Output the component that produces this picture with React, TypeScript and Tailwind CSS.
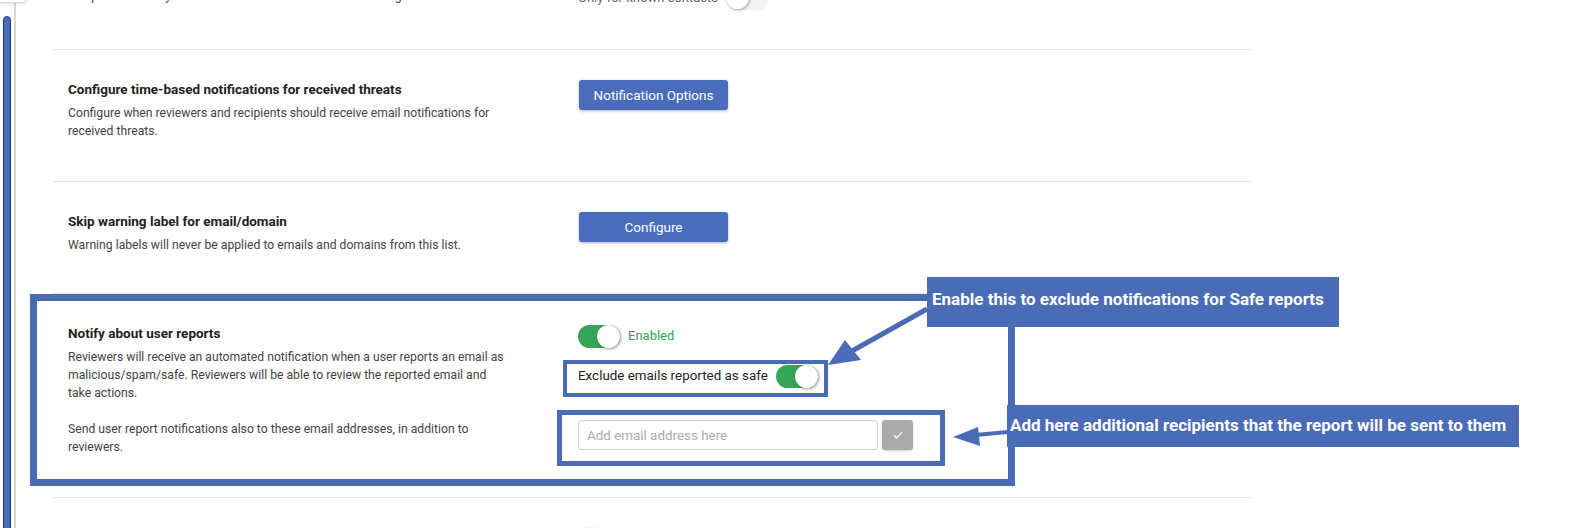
import React from "react";

function Toggle({ on }: { on: boolean }) {
  if (on) {
    return (
      <div className="flex h-[23px] w-[42px] shrink-0 items-center justify-end rounded-full bg-[#36a558]">
        <div className="h-[23px] w-[23px] rounded-full bg-white shadow-[1px_1px_3px_rgba(0,0,0,0.4)]" />
      </div>
    );
  }
  return (
    <div className="flex h-[23px] w-[42px] shrink-0 items-center justify-start rounded-full bg-[#f3f3f3] shadow-[0_1px_2px_rgba(0,0,0,0.08)]">
      <div className="h-[23px] w-[23px] rounded-full bg-white shadow-[1px_1px_3px_rgba(0,0,0,0.3)]" />
    </div>
  );
}

function Title({ children }: { children: React.ReactNode }) {
  return <div className="text-[13.5px] font-bold leading-[18px] text-[#222]">{children}</div>;
}

function Desc({ children, className = "" }: { children: React.ReactNode; className?: string }) {
  return <div className={"text-[12.2px] leading-[18px] text-[#444] " + className}>{children}</div>;
}

function BlueButton({ label }: { label: string }) {
  return (
    <button className="ml-px flex h-[30px] w-[149px] items-center justify-center rounded-[3px] bg-[#4a6dbb] text-[13.5px] text-white shadow-[0_1px_3px_rgba(0,0,0,0.3)]">
      {label}
    </button>
  );
}

export default function App() {
  return (
    <div className="relative h-[528px] w-[1589px] overflow-hidden bg-white font-['Roboto',sans-serif]">
      <div className="flex h-full">
        {/* sidebar rail */}
        <div className="flex h-full w-[53px] shrink-0">
          <div className="ml-[3px] mt-[16px] h-full w-[8px] rounded-t-full border border-[#1f3a73] bg-[#4a6cb7]" />
          <div className="ml-[3px] h-full w-[2px] bg-[#d8d8d8]" />
        </div>

        {/* content */}
        <div className="flex w-[1200px] flex-col">
          {/* row 0 (cut off) */}
          <div className="flex h-[50px] shrink-0 border-b border-[#e3e3e3] pl-[15px]">
            <div className="w-[510px] shrink-0">
              <Desc className="-mt-[13px] whitespace-nowrap">
                Recipients will only see the banner for emails that are missing
              </Desc>
            </div>
            <div className="-mt-[14px] flex h-[23px] items-center gap-[8px]">
              <span className="text-[13px] text-[#666]">Only for known contacts</span>
              <Toggle on={false} />
            </div>
          </div>

          {/* row 1 */}
          <div className="flex h-[132px] shrink-0 border-b border-[#e3e3e3] pl-[15px] pt-[30px]">
            <div className="w-[510px] shrink-0">
              <Title>Configure time-based notifications for received threats</Title>
              <Desc className="mt-[6px]">
                Configure when reviewers and recipients should receive email notifications for
                <br />
                received threats.
              </Desc>
            </div>
            <div>
              <BlueButton label="Notification Options" />
            </div>
          </div>

          {/* row 2 */}
          <div className="flex h-[112px] shrink-0 border-b border-[#e3e3e3] pl-[15px] pt-[30px]">
            <div className="w-[510px] shrink-0">
              <Title>Skip warning label for email/domain</Title>
              <Desc className="mt-[6px]">
                Warning labels will never be applied to emails and domains from this list.
              </Desc>
            </div>
            <div>
              <BlueButton label="Configure" />
            </div>
          </div>

          {/* row 3 */}
          <div className="flex h-[204px] shrink-0 border-b border-[#e3e3e3] pl-[15px] pt-[30px]">
            <div className="w-[510px] shrink-0">
              <Title>Notify about user reports</Title>
              <Desc className="mt-[6px]">
                Reviewers will receive an automated notification when a user reports an email as
                <br />
                malicious/spam/safe. Reviewers will be able to review the reported email and
                <br />
                take actions.
              </Desc>
              <Desc className="mt-[18px]">
                Send user report notifications also to these email addresses, in addition to
                <br />
                reviewers.
              </Desc>
            </div>
            <div className="flex flex-col">
              <div className="flex h-[24px] items-center gap-[8px]">
                <Toggle on />
                <span className="text-[13px] text-[#2f9e5a]">Enabled</span>
              </div>
              <div className="mt-[16px] flex h-[24px] items-center gap-[8px]">
                <span className="text-[13.4px] text-[#222]">Exclude emails reported as safe</span>
                <Toggle on />
              </div>
              <div className="mt-[32px] flex gap-[4px]">
                <input
                  className="h-[30px] w-[300px] rounded-[3px] border border-[#cfcfcf] px-[8px] text-[13.4px] text-[#222] outline-none placeholder:text-[#ababab]"
                  placeholder="Add email address here"
                />
                <button className="flex h-[30px] w-[31px] items-center justify-center rounded-[3px] bg-[#ababab] shadow-[0_1px_2px_rgba(0,0,0,0.2)]">
                  <svg width="10" height="8" viewBox="0 0 10 8" fill="none">
                    <path d="M1 4.2 L3.7 6.8 L9 1.2" stroke="white" strokeWidth="1.2" />
                  </svg>
                </button>
              </div>
            </div>
          </div>

          {/* row 4 (cut off) */}
          <div className="flex pl-[15px] pt-[30px]">
            <div className="w-[510px] shrink-0" />
            <Toggle on={false} />
          </div>
        </div>
      </div>

      {/* partially visible card at top-left */}
      <div className="absolute -left-[10px] -top-[20px] h-[23px] w-[38px] rounded-md border border-[#dcdcdc] bg-white shadow-[0_1px_3px_rgba(0,0,0,0.12)]" />

      {/* annotation overlays */}
      <div className="pointer-events-none absolute left-[30px] top-[294px] h-[192px] w-[985px] border-[7px] border-[#4a6cb7]" />
      <div className="pointer-events-none absolute left-[563px] top-[360px] h-[37px] w-[265px] border-[4px] border-[#4a6cb7]" />
      <div className="pointer-events-none absolute left-[557px] top-[410px] h-[56px] w-[388px] border-[5px] border-[#4a6cb7]" />

      <svg className="pointer-events-none absolute left-0 top-0" width="1589" height="528">
        <line x1="927" y1="309" x2="852" y2="351" stroke="#4a6cb7" strokeWidth="5" />
        <polygon points="828,365 845,340 861,360" fill="#4a6cb7" />
        <line x1="1008" y1="432" x2="975" y2="435" stroke="#4a6cb7" strokeWidth="4" />
        <polygon points="953,437 978,427 980,446" fill="#4a6cb7" />
      </svg>

      <div className="absolute left-[927px] top-[277px] flex h-[50px] w-[412px] items-center bg-[#4a6cb7] pb-[4px] pl-[5px]">
        <span className="whitespace-nowrap text-[17px] font-bold text-white">
          Enable this to exclude notifications for Safe reports
        </span>
      </div>
      <div className="absolute left-[1007px] top-[405px] flex h-[42px] w-[512px] items-center bg-[#4a6cb7] pl-[3px]">
        <span className="whitespace-nowrap text-[17px] font-bold text-white">
          Add here additional recipients that the report will be sent to them
        </span>
      </div>
    </div>
  );
}
